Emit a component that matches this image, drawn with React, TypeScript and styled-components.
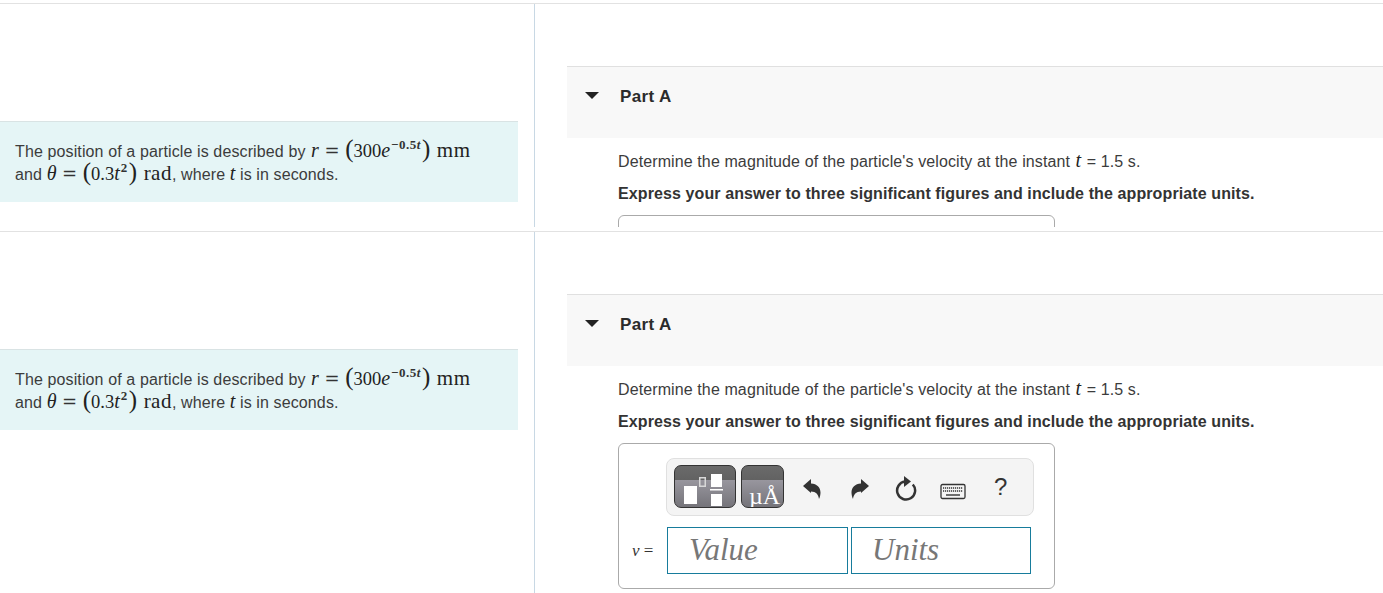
import React from "react";
import styled, { createGlobalStyle } from "styled-components";

const Global = createGlobalStyle`
  html, body { margin: 0; padding: 0; height: 593px; overflow: hidden; background: #fff; }
  body { font-family: "Liberation Sans", Arial, sans-serif; color: #333; }
`;

const Page = styled.div`
  padding-top: 3px;
`;

const Row = styled.section<{ $height: number }>`
  display: flex;
  height: ${(p) => p.$height}px;
  border-top: 1px solid #e2e2e2;
  padding-bottom: 4px;
  box-sizing: content-box;
`;

const Left = styled.div`
  width: 534px;
  flex: none;
  padding-top: 117px;
  box-sizing: border-box;
`;

const Info = styled.div`
  width: 518px;
  height: 81px;
  box-sizing: border-box;
  background: #e5f5f6;
  border-top: 1px solid #d9e3e4;
  padding: 18px 15px 0;
  font-size: 16px;
  line-height: 23px;
  letter-spacing: 0.12px;
  color: #3c3c3c;
  white-space: nowrap;
`;

const M = styled.span`
  font-family: "Liberation Serif", "Times New Roman", serif;
  font-size: 18.500px;
  line-height: 0;
  letter-spacing: 0;
  color: #222;
`;

const MI = styled(M)<{ $l?: number; $r?: number }>`
  font-style: italic;
  font-size: 20px;
  margin-left: ${(p) => p.$l ?? 0}px;
  margin-right: ${(p) => p.$r ?? 0}px;
`;

const Unit = styled(M)`
  font-size: 21px;
  letter-spacing: 0.500px;
  margin-left: 2px;
`;

const Eq = styled.span`
  font-family: "DejaVu Serif", serif;
  font-size: 18px;
  line-height: 0;
  letter-spacing: 0;
  color: #333;
  margin: 0 1px;
`;

const Sup = styled.sup`
  font-family: "Liberation Serif", serif;
  font-size: 13px;
  line-height: 0;
  vertical-align: 8px;
  font-weight: 700;
  letter-spacing: 0.500px;
  color: #333;
  margin: 0 1px 0 1px;
`;

const Paren = styled(M)`
  font-size: 25px;
  font-weight: 400;
`;

const Right = styled.div`
  flex: 1;
  min-width: 0;
  border-left: 1px solid #c8d8e4;
  padding: 62px 0 0 32px;
  overflow: hidden;
`;

const PartHeader = styled.div`
  display: flex;
  align-items: center;
  height: 72px;
  box-sizing: border-box;
  background: #f8f8f8;
  border-top: 1px solid #e0e0e0;
  padding: 0 0 14px 18px;
`;

const Caret = styled.span`
  width: 0;
  height: 0;
  border-left: 7px solid transparent;
  border-right: 7px solid transparent;
  border-top: 7px solid #222;
  margin-right: 21px;
`;

const PartTitle = styled.h2`
  margin: 2px 0 0;
  font-size: 17px;
  font-weight: 700;
  letter-spacing: 0.350px;
  color: #2b2b2b;
  line-height: 20px;
`;

const Body = styled.div`
  padding: 12px 0 0 51px;
`;

const Question = styled.p`
  margin: 0;
  font-size: 16px;
  line-height: 23px;
  letter-spacing: 0.107px;
  color: #3c3c3c;
  white-space: nowrap;
`;

const Instruction = styled.p`
  margin: 9px 0 0;
  font-size: 16px;
  line-height: 23px;
  font-weight: 700;
  letter-spacing: 0.107px;
  color: #333;
  white-space: nowrap;
`;

const AnswerBox = styled.div`
  width: 437px;
  height: 146px;
  margin-top: 10px;
  box-sizing: border-box;
  border: 1px solid #aaa;
  border-radius: 6px;
  padding: 14px 20px 0 0;
`;

const Toolbar = styled.div`
  width: 368px;
  height: 58px;
  margin-left: 47px;
  box-sizing: border-box;
  background: #f4f4f4;
  border: 1px solid #e0e0e0;
  border-radius: 8px;
  display: flex;
  align-items: flex-start;
  padding: 6px 0 0 7px;
`;

const Template = styled.div<{ $width: number; $gap?: number }>`
  position: relative;
  width: ${(p) => p.$width}px;
  height: 43px;
  flex: none;
  box-sizing: border-box;
  margin-right: ${(p) => p.$gap ?? 0}px;
  border: 1px solid #333;
  border-radius: 7px;
  overflow: hidden;
  background: linear-gradient(#6a6a6a 0, #626262 14px, #98969e 14px, #75747a 100%);
`;

const Glyph = styled.span`
  position: absolute;
  left: 7px;
  bottom: -2px;
  font-family: "Liberation Serif", serif;
  font-size: 24px;
  line-height: 26px;
  color: #fff;
  white-space: nowrap;
`;

const ToolIcon = styled.svg<{ $left: number; $top?: number }>`
  flex: none;
  display: block;
  margin-left: ${(p) => p.$left}px;
  margin-top: ${(p) => p.$top ?? 13}px;
  color: #333;
`;

const Help = styled.span`
  margin: 8px 0 0 28px;
  font-size: 24px;
  line-height: 28px;
  color: #333;
`;

const InputRow = styled.div`
  display: flex;
  align-items: center;
  margin-top: 11px;
  padding-left: 13px;
`;

const VarLabel = styled.span`
  width: 35px;
  flex: none;
  font-family: "Liberation Serif", serif;
  font-size: 17px;
  color: #333;
  white-space: nowrap;
`;

const Field = styled.div<{ $width: number; $gap?: number; $indent: number }>`
  width: ${(p) => p.$width}px;
  height: 47px;
  flex: none;
  box-sizing: border-box;
  margin-right: ${(p) => p.$gap ?? 0}px;
  border: 1px solid #177c9c;
  padding-left: ${(p) => p.$indent}px;
  font-family: "Liberation Serif", serif;
  font-style: italic;
  font-size: 31px;
  line-height: 43px;
  color: #777;
`;

function Formula1() {
  return (
    <>
      The position of a particle is described by <MI $l={1}>r</MI> <Eq>=</Eq> <Paren>(</Paren>
      <M>300</M><MI>e</MI><Sup>−0.5<i>t</i></Sup><Paren>)</Paren> <Unit>mm</Unit>
      <br />
      and <MI>θ</MI> <Eq>=</Eq> <Paren>(</Paren><M>0.3</M><MI>t</MI><Sup>2</Sup><Paren>)</Paren> <Unit>rad</Unit>, where <MI>t</MI> is in seconds.
    </>
  );
}

function Toolset() {
  return (
    <Toolbar>
      <Template $width={62} $gap={5}>
        <svg width="60" height="41" viewBox="0 0 60 41" aria-hidden="true">
          <rect x="9" y="20" width="13" height="18" fill="#fff" />
          <rect x="24.750" y="11.750" width="5.500" height="8.500" fill="none" stroke="#d8d8d8" strokeWidth="1.500" />
          <rect x="36" y="8" width="11" height="13" fill="#fff" />
          <rect x="35" y="23" width="13" height="1.500" fill="#fff" />
          <rect x="36" y="28" width="11" height="12" fill="#fff" />
        </svg>
      </Template>
      <Template $width={43}>
        <Glyph>µÅ</Glyph>
      </Template>
      <ToolIcon $left={18} width="20" height="22" viewBox="0 0 20 22" aria-hidden="true">
        <path fill="currentColor" d="M1 8 9 1v4.500c6 .3 9.500 4 9.500 9 0 2-.5 4.500-1.500 6.500-.5-4.500-3-7.500-8-7.500V15z" />
      </ToolIcon>
      <ToolIcon $left={28} width="20" height="22" viewBox="0 0 20 22" aria-hidden="true">
        <path fill="currentColor" d="M19 8 11 1v4.500c-6 .3-9.500 4-9.500 9 0 2 .5 4.500 1.500 6.500.5-4.500 3-7.500 8-7.500V15z" />
      </ToolIcon>
      <ToolIcon $left={25} $top={11} width="22" height="25" viewBox="0 0 22 25" aria-hidden="true">
        <path fill="none" stroke="currentColor" strokeWidth="2.500" d="M17.800 8.500A9 9 0 1 1 10 5.600" />
        <path fill="currentColor" d="M9 0 16 5.500 9 11z" />
      </ToolIcon>
      <ToolIcon $left={23} $top={18} width="26" height="18" viewBox="0 0 26 18" aria-hidden="true">
        <rect x="1" y="1.500" width="24" height="14" rx="1.500" fill="#f4f4f4" stroke="currentColor" strokeWidth="1.300" />
        <path stroke="currentColor" strokeWidth="1.400" strokeDasharray="1.200 .8" d="M3 5h20M3 8h20" />
        <path stroke="currentColor" strokeWidth="1.400" d="M6 12h14" />
      </ToolIcon>
      <Help>?</Help>
    </Toolbar>
  );
}

function Question1({ full }: { full: boolean }) {
  return (
    <Row $height={full ? 361 : 223}>
      <Left>
        <Info><Formula1 /></Info>
      </Left>
      <Right>
        <PartHeader>
          <Caret />
          <PartTitle>Part A</PartTitle>
        </PartHeader>
        <Body>
          <Question>
            Determine the magnitude of the particle's velocity at the instant <MI $l={1} $r={1}>t</MI> = 1.5 s.
          </Question>
          <Instruction>Express your answer to three significant figures and include the appropriate units.</Instruction>
          <AnswerBox>
            {full && (
              <>
                <Toolset />
                <InputRow>
                  <VarLabel><i>v</i> =</VarLabel>
                  <Field $width={181} $gap={3} $indent={21}>Value</Field>
                  <Field $width={180} $indent={20}>Units</Field>
                </InputRow>
              </>
            )}
          </AnswerBox>
        </Body>
      </Right>
    </Row>
  );
}

export default function App() {
  return (
    <Page>
      <Global />
      <Question1 full={false} />
      <Question1 full />
    </Page>
  );
}
